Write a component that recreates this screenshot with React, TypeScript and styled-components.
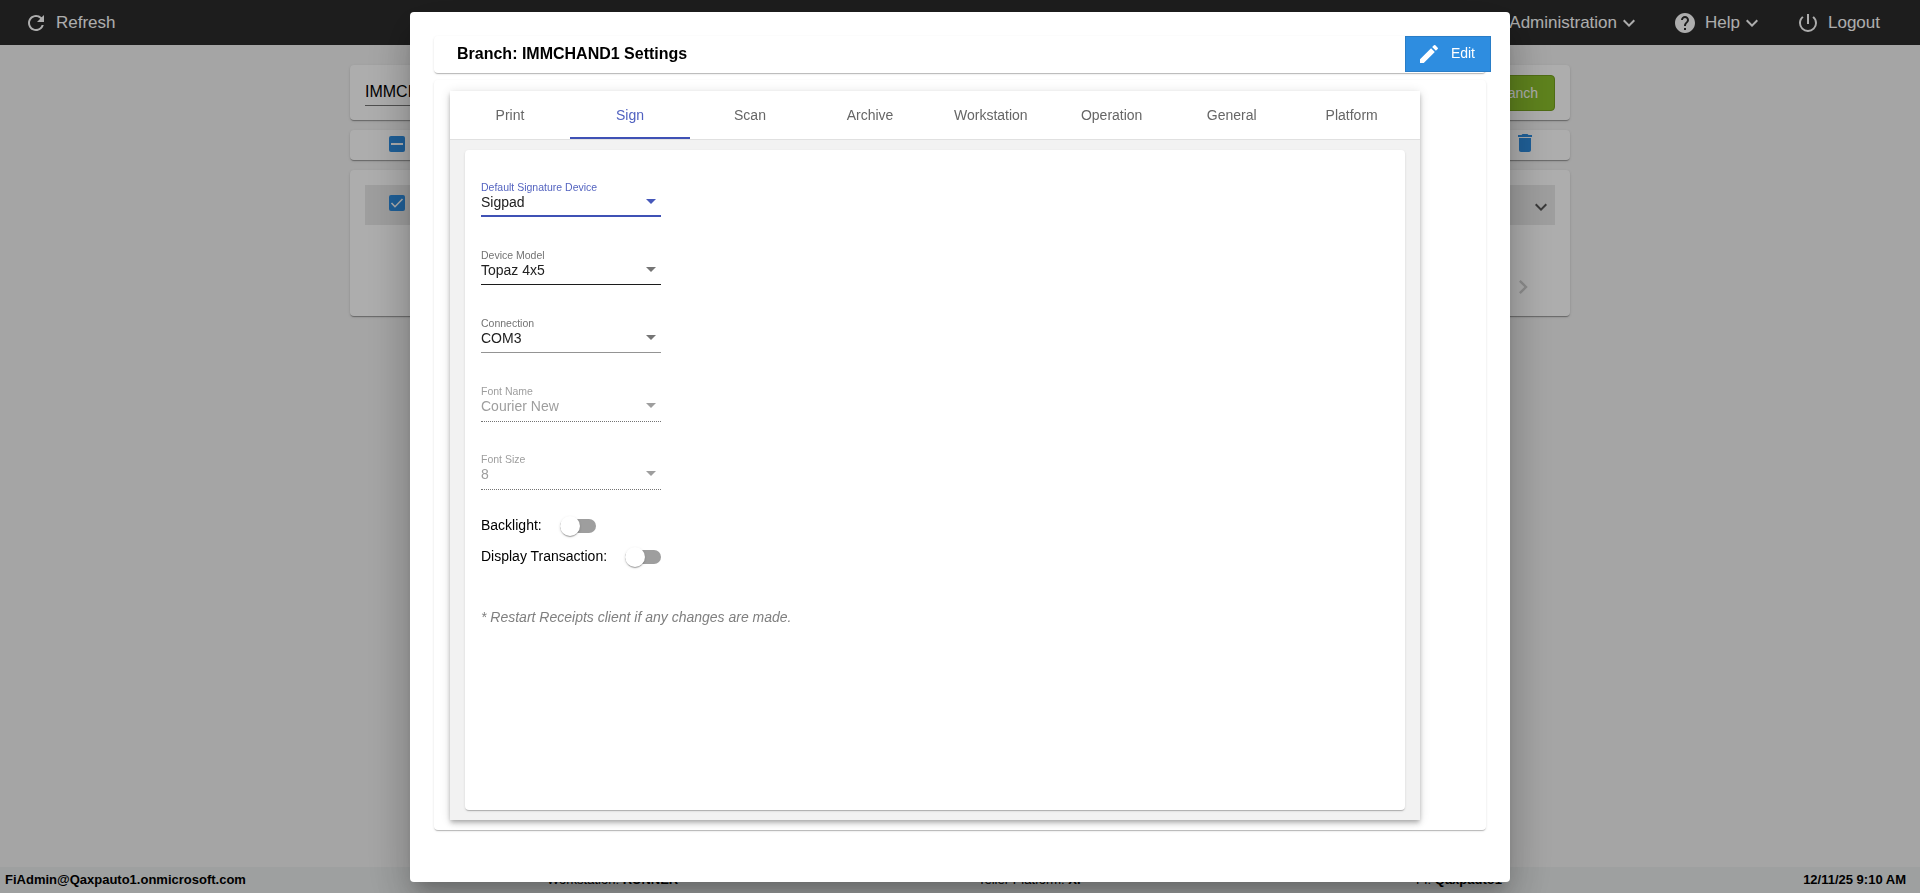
import React from "react";
import styled, { createGlobalStyle } from "styled-components";

const GlobalStyle = createGlobalStyle`
  * { box-sizing: border-box; }
  html, body { margin: 0; height: 100%; overflow: hidden; }
  body { font-family: "Liberation Sans", Arial, sans-serif; font-size: 14px; color: #000; background: #f3f3f3; }
`;

const elevation1 =
  "0 2px 1px -1px rgba(0,0,0,.2), 0 1px 1px 0 rgba(0,0,0,.14), 0 1px 3px 0 rgba(0,0,0,.12)";

const softElevation =
  "0 2px 1px -1px rgba(0,0,0,.15), 0 1px 1px 0 rgba(0,0,0,.1), 0 1px 3px 0 rgba(0,0,0,.09)";

const Page = styled.div`
  height: 100vh;
  display: flex;
  flex-direction: column;
`;

const TopBar = styled.header`
  height: 45px;
  flex: none;
  background: #2c2c2c;
  color: #fff;
  display: flex;
  align-items: center;
  justify-content: space-between;
  padding: 0 40px 0 24px;
  font-size: 17px;
`;

const Menu = styled.nav`
  display: flex;
  gap: 32px;
`;

const MenuItem = styled.div`
  display: flex;
  align-items: center;
  gap: 8px;
  line-height: 24px;
`;

const WithChevron = styled.span`
  display: flex;
  align-items: center;
  svg { margin-top: 1px; }
`;

const Content = styled.main`
  flex: 1;
  display: flex;
  flex-direction: column;
  align-items: center;
  gap: 10px;
  padding-top: 20px;
`;

const Card = styled.section<{ $height: number }>`
  width: 1220px;
  height: ${(p) => p.$height}px;
  border-radius: 4px;
  background: #fff;
  box-shadow: ${elevation1};
`;

const SearchCard = styled(Card)`
  display: flex;
  justify-content: space-between;
  padding: 10px 15px;
`;

const SearchField = styled.div`
  width: 300px;
  height: 31px;
  border-bottom: 1px solid #757575;
  font-size: 16px;
  line-height: 33px;
`;

const GreenButton = styled.button`
  height: 36px;
  padding: 0 16px;
  border: 1px solid #75a01f;
  border-radius: 4px;
  background: #8bbf2b;
  color: #fff;
  font: 14px "Liberation Sans", Arial, sans-serif;
`;

const ToolsCard = styled(Card)`
  display: flex;
  justify-content: space-between;
  padding: 1px 33px 0 39px;
`;

const CheckIcon = styled.svg`
  width: 16px;
  height: 16px;
  margin-top: 5px;
  border-radius: 2px;
  background: #2e8de0;
`;

const ListCard = styled(Card)`
  padding: 15px;
  display: flex;
  flex-direction: column;
`;

const ListRow = styled.div`
  height: 40px;
  background: #e9e9e9;
  display: flex;
  justify-content: space-between;
  padding: 5px 2px 0 24px;
  svg:last-child { margin-top: 5px; }
`;

const Pager = styled.div`
  display: flex;
  justify-content: flex-end;
  padding: 48px 18px 0 0;
`;

const Footer = styled.footer`
  height: 26px;
  flex: none;
  background: #e9ecec;
  display: grid;
  grid-template-columns: 542px 431px 438px 1fr auto;
  padding: 0 14px 0 5px;
  font-size: 13px;
  line-height: 25px;
`;

const Backdrop = styled.div`
  position: fixed;
  inset: 0;
  background: rgba(0, 0, 0, 0.32);
  display: flex;
  justify-content: center;
  align-items: flex-start;
  padding-top: 12px;
`;

const Dialog = styled.div`
  width: 1100px;
  height: 870px;
  padding: 24px;
  border-radius: 4px;
  background: #fff;
  display: flex;
  flex-direction: column;
  gap: 7px;
  box-shadow: 0 11px 15px -7px rgba(0,0,0,.2), 0 24px 38px 3px rgba(0,0,0,.14), 0 9px 46px 8px rgba(0,0,0,.12);
`;

const TitleCard = styled.div`
  height: 37px;
  flex: none;
  display: flex;
  justify-content: space-between;
  align-items: flex-start;
  padding-left: 23px;
  border-radius: 4px;
  box-shadow: ${softElevation};
`;

const Title = styled.h1`
  margin: 0;
  font-size: 16px;
  line-height: 35px;
`;

const EditButton = styled.button`
  width: 86px;
  height: 36px;
  margin-right: -5px;
  padding: 0 15px 0 11px;
  display: flex;
  align-items: center;
  justify-content: space-between;
  border: 1px solid #297dc7;
  background: #2e8de0;
  color: #fff;
  font: 14px/16px "Liberation Sans", Arial, sans-serif;
`;

const EditLabel = styled.span`
  padding-bottom: 2px;
`;

const SettingsCard = styled.div`
  height: 750px;
  padding: 11px 16px;
  border-radius: 4px;
  box-shadow: ${softElevation};
`;

const TabGroup = styled.div`
  width: 970px;
  height: 729px;
  background: #f2f2f2;
  box-shadow: 0 2px 4px -1px rgba(0,0,0,.2), 0 4px 5px 0 rgba(0,0,0,.14), 0 1px 10px 0 rgba(0,0,0,.12);
`;

const TabList = styled.div`
  height: 49px;
  display: flex;
  background: #fff;
  border-bottom: 1px solid #e0e0e0;
`;

const Tab = styled.div<{ $active: boolean }>`
  min-width: 120px;
  padding: 0 24px;
  text-align: center;
  line-height: 48px;
  height: 48px;
  color: ${(p) => (p.$active ? "#5061c0" : "#666")};
  box-shadow: ${(p) => (p.$active ? "inset 0 -2px #3f51b5" : "none")};
`;

const Panel = styled.div`
  height: 660px;
  margin: 10px 15px;
  padding: 32px 16px;
  border-radius: 4px;
  background: #fff;
  box-shadow: ${softElevation};
`;

type FieldState = "focused" | "hover" | "normal" | "disabled";

const underline: Record<FieldState, string> = {
  focused: "2px solid #3f51b5",
  hover: "1px solid #1c1c1c",
  normal: "1px solid #949494",
  disabled: "1px dotted #737373",
};

const Field = styled.div<{ $state: FieldState }>`
  width: 180px;
  height: ${(p) => (p.$state === "disabled" ? 36 : 35)}px;
  margin-bottom: ${(p) => (p.$state === "disabled" ? 32 : 33)}px;
  color: ${(p) => (p.$state === "disabled" ? "#9e9e9e" : "#212121")};
  border-bottom: ${(p) => underline[p.$state]};
`;

const FieldLabel = styled.div<{ $state: FieldState }>`
  height: 11px;
  font-size: 10.5px;
  line-height: 11px;
  color: ${(p) => (p.$state === "focused" ? "#5464c0" : p.$state === "disabled" ? "#9e9e9e" : "#737373")};
`;

const FieldValue = styled.div<{ $state: FieldState }>`
  height: 18px;
  display: flex;
  justify-content: space-between;
  line-height: 18px;
  padding-right: 5px;
  &::after {
    content: "";
    margin-top: 6px;
    height: 0;
    border: 5px solid transparent;
    border-bottom: 0;
    border-top-color: ${(p) => (p.$state === "focused" ? "#4658ba" : p.$state === "disabled" ? "#9e9e9e" : "#757575")};
  }
`;

const Toggles = styled.div`
  margin-top: -12px;
`;

const ToggleRow = styled.div`
  display: flex;
  gap: 18px;
  height: 31px;
  line-height: 31px;
`;

const Track = styled.span`
  width: 36px;
  height: 14px;
  margin-top: 9px;
  border-radius: 8px;
  background: #9e9e9e;
  display: flex;
  align-items: center;
`;

const Thumb = styled.span`
  width: 20px;
  height: 20px;
  border-radius: 50%;
  background: #fff;
  box-shadow: ${elevation1};
`;

const Note = styled.p`
  margin: 36px 0 0;
  font-style: italic;
  line-height: 18px;
  color: #7f7f7f;
`;

const Icon = ({ d, size = 24, color = "currentColor" }: { d: string; size?: number; color?: string }) => (
  <svg width={size} height={size} viewBox="0 0 24 24" fill={color}>
    <path d={d} />
  </svg>
);

const paths = {
  refresh: "M17.65 6.35A7.958 7.958 0 0 0 12 4c-4.42 0-7.99 3.58-7.99 8s3.57 8 7.99 8c3.73 0 6.84-2.55 7.73-6h-2.08A5.99 5.99 0 0 1 12 18c-3.31 0-6-2.69-6-6s2.69-6 6-6c1.66 0 3.14.69 4.22 1.78L13 11h7V4l-2.35 2.35z",
  down: "M16.59 8.59 12 13.17 7.41 8.59 6 10l6 6 6-6z",
  right: "M10 6 8.59 7.41 13.17 12l-4.58 4.59L10 18l6-6z",
  help: "M12 2C6.48 2 2 6.48 2 12s4.48 10 10 10 10-4.48 10-10S17.52 2 12 2zm1 17h-2v-2h2v2zm2.07-7.75-.9.92C13.45 12.9 13 13.5 13 15h-2v-.5c0-1.1.45-2.1 1.17-2.83l1.24-1.26c.37-.36.59-.86.59-1.41 0-1.1-.9-2-2-2s-2 .9-2 2H8c0-2.21 1.79-4 4-4s4 1.79 4 4c0 .88-.36 1.68-.93 2.25z",
  power: "M13 3h-2v10h2V3zm4.83 2.17-1.42 1.42A6.92 6.92 0 0 1 19 12c0 3.87-3.13 7-7 7s-7-3.13-7-7c0-2.19 1.01-4.14 2.58-5.42L6.17 5.17A8.932 8.932 0 0 0 3 12a9 9 0 0 0 18 0c0-2.74-1.23-5.18-3.17-6.83z",
  trash: "M6 19c0 1.1.9 2 2 2h8c1.1 0 2-.9 2-2V7H6v12zM19 4h-3.5l-1-1h-5l-1 1H5v2h14V4z",
  edit: "M3 17.25V21h3.75L17.81 9.94l-3.75-3.75L3 17.25zM20.71 7.04a1 1 0 0 0 0-1.41l-2.34-2.34a1 1 0 0 0-1.41 0l-1.83 1.83 3.75 3.75 1.83-1.83z",
};

const tabs = ["Print", "Sign", "Scan", "Archive", "Workstation", "Operation", "General", "Platform"];

const fields: { label: string; value: string; state: FieldState }[] = [
  { label: "Default Signature Device", value: "Sigpad", state: "focused" },
  { label: "Device Model", value: "Topaz 4x5", state: "hover" },
  { label: "Connection", value: "COM3", state: "normal" },
  { label: "Font Name", value: "Courier New", state: "disabled" },
  { label: "Font Size", value: "8", state: "disabled" },
];

const toggles = ["Backlight:", "Display Transaction:"];

export default function App() {
  return (
    <>
      <GlobalStyle />
      <Page>
        <TopBar>
          <MenuItem>
            <Icon d={paths.refresh} />
            Refresh
          </MenuItem>
          <Menu>
            <MenuItem>
              <WithChevron>Administration<Icon d={paths.down} /></WithChevron>
            </MenuItem>
            <MenuItem>
              <Icon d={paths.help} />
              <WithChevron>Help<Icon d={paths.down} /></WithChevron>
            </MenuItem>
            <MenuItem>
              <Icon d={paths.power} />
              Logout
            </MenuItem>
          </Menu>
        </TopBar>
        <Content>
          <SearchCard $height={55}>
            <SearchField>IMMCHAND1</SearchField>
            <GreenButton>Add Branch</GreenButton>
          </SearchCard>
          <ToolsCard $height={30}>
            <CheckIcon viewBox="0 0 16 16"><path d="M2 8h12" stroke="#fff" strokeWidth="2" /></CheckIcon>
            <Icon d={paths.trash} color="#2e8de0" />
          </ToolsCard>
          <ListCard $height={146}>
            <ListRow>
              <CheckIcon viewBox="0 0 16 16"><path d="M2.500 8 6 11.700 13.500 4" stroke="#fff" strokeWidth="1.600" fill="none" /></CheckIcon>
              <Icon d={paths.down} color="#555" />
            </ListRow>
            <Pager><Icon d={paths.right} size={28} color="#d0d0d0" /></Pager>
          </ListCard>
        </Content>
        <Footer>
          <b>FiAdmin@Qaxpauto1.onmicrosoft.com</b>
          <span>Workstation: <b>RUNNER</b></span>
          <span>Teller Platform: <b>XP</b></span>
          <span>FI: <b>Qaxpauto1</b></span>
          <b>12/11/25 9:10 AM</b>
        </Footer>
      </Page>
      <Backdrop>
        <Dialog>
          <TitleCard>
            <Title>Branch: IMMCHAND1 Settings</Title>
            <EditButton><Icon d={paths.edit} /><EditLabel>Edit</EditLabel></EditButton>
          </TitleCard>
          <SettingsCard>
            <TabGroup>
              <TabList>
                {tabs.map((t) => (
                  <Tab key={t} $active={t === "Sign"}>{t}</Tab>
                ))}
              </TabList>
              <Panel>
                {fields.map((f) => (
                  <Field key={f.label} $state={f.state}>
                    <FieldLabel $state={f.state}>{f.label}</FieldLabel>
                    <FieldValue $state={f.state}>{f.value}</FieldValue>
                  </Field>
                ))}
                <Toggles>
                  {toggles.map((label) => (
                    <ToggleRow key={label}>
                      {label}
                      <Track><Thumb /></Track>
                    </ToggleRow>
                  ))}
                </Toggles>
                <Note>* Restart Receipts client if any changes are made.</Note>
              </Panel>
            </TabGroup>
          </SettingsCard>
        </Dialog>
      </Backdrop>
    </>
  );
}
